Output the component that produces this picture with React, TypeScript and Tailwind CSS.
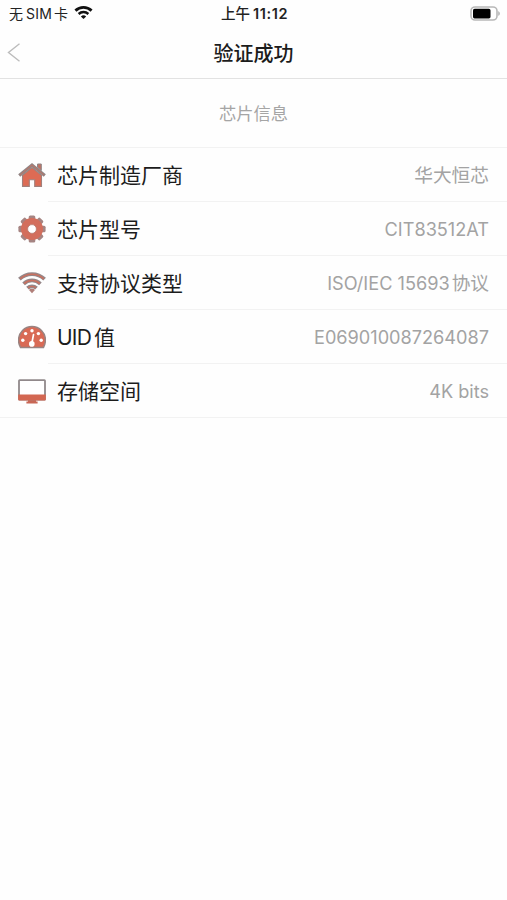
import type { ReactNode } from "react";
import clsx from "clsx";

type InfoRow = {
  id: string;
  label: ReactNode;
  value: ReactNode;
  icon: ReactNode;
};

function HouseIcon() {
  return (
    <svg width="28" height="28" viewBox="0 0 28 28" fill="none">
      <path d="M4.5 14.2 14 6.5l9.5 7.7v11.2h-6.8v-6.6h-5.4v6.6H4.5z" fill="#dd6b54" stroke="#a0807c" strokeWidth="1.1" />
      <path d="M19.5 3h3.8v6.5l-3.8-3.2z" fill="#c07264" stroke="#8f8585" strokeWidth="1" />
      <path d="M1.2 14.6 14 4l12.8 10.6" stroke="#8f8585" strokeWidth="3.2" />
      <path d="M1.8 14.1 14 4l12.2 10.1" stroke="#b8776b" strokeWidth="1.1" />
    </svg>
  );
}

function GearIcon() {
  return (
    <svg width="28" height="28" viewBox="0 0 28 28">
      <g fill="#a58482">
        {[0, 45, 90, 135].map((deg) => (
          <rect key={deg} x="10.7" y="0.4" width="6.6" height="27.2" rx="1.6" transform={`rotate(${deg} 14 14)`} />
        ))}
      </g>
      <circle cx="14" cy="14" r="11" fill="#d36e5c" />
      <circle cx="14" cy="14" r="4.4" fill="#fff" stroke="#b8796d" strokeWidth="0.8" />
    </svg>
  );
}

function SignalIcon() {
  return (
    <svg width="28" height="28" viewBox="0 0 28 28" fill="none">
      <g stroke="#94888a" strokeWidth="3.8">
        <path d="M1.4 10.2a18 18 0 0 1 25.2 0" />
        <path d="M5.6 14.9a12 12 0 0 1 16.8 0" />
        <path d="M9.5 19.2a6.5 6.5 0 0 1 9 0" />
      </g>
      <g stroke="#c9705f" strokeWidth="1.6">
        <path d="M2.2 9.8a17.4 17.4 0 0 1 23.6 0" />
        <path d="M6.2 14.6a11.5 11.5 0 0 1 15.6 0" />
        <path d="M10.1 18.9a6 6 0 0 1 7.8 0" />
      </g>
      <path d="M11 21a4.3 4.3 0 0 1 6 0l-3 3.2z" fill="#b07f79" />
    </svg>
  );
}

function GaugeIcon() {
  return (
    <svg width="28" height="28" viewBox="0 0 28 28">
      <path
        d="M2.6 24.6A13.4 13.4 0 0 1 .6 17a13.4 13.4 0 0 1 26.8 0c0 2.8-.7 5.3-2 7.6z"
        fill="#d96a55"
        stroke="#998482"
        strokeWidth="1.5"
      />
      <g fill="#fff">
        <circle cx="4.8" cy="17.2" r="1.7" />
        <circle cx="7.6" cy="10.6" r="1.7" />
        <circle cx="14" cy="7.7" r="1.7" />
        <circle cx="20.4" cy="10.6" r="1.7" />
        <circle cx="23.2" cy="17.2" r="1.7" />
        <circle cx="13.8" cy="20.9" r="2.8" />
      </g>
      <path d="m13.8 20.5 1.7-8.8" stroke="#fff" strokeWidth="1.7" strokeLinecap="round" />
    </svg>
  );
}

function MonitorIcon() {
  return (
    <svg width="28" height="28" viewBox="0 0 28 28">
      <path d="M10 22h8v2.4h1.6v2H8.4v-2H10z" fill="#c86755" />
      <rect x="1" y="3.2" width="26" height="19.3" rx="0.6" fill="#fff" stroke="#91898b" strokeWidth="1.8" />
      <path d="M.2 17.6h27.6v4.8a1 1 0 0 1-1 1H1.2a1 1 0 0 1-1-1z" fill="#d36752" />
    </svg>
  );
}

const rows: InfoRow[] = [
  {
    id: "vendor",
    label: "芯片制造厂商",
    value: <span className="text-[18.7px]">华大恒芯</span>,
    icon: <HouseIcon />,
  },
  { id: "model", label: "芯片型号", value: "CIT83512AT", icon: <GearIcon /> },
  {
    id: "protocol",
    label: "支持协议类型",
    value: (
      <>
        ISO/IEC 15693<span className="ml-[2px] text-[18.7px]">协议</span>
      </>
    ),
    icon: <SignalIcon />,
  },
  {
    id: "uid",
    label: (
      <>
        <span className="tracking-[-0.8px]">UID</span>
        <span className="ml-[3px]">值</span>
      </>
    ),
    value: "E069010087264087",
    icon: <GaugeIcon />,
  },
  { id: "storage", label: "存储空间", value: "4K bits", icon: <MonitorIcon /> },
];

function StatusBar() {
  return (
    <div className="grid h-[27px] grid-cols-3 items-center pr-[6px] pl-[9px] text-[14px] leading-none text-[#222]">
      <div className="flex items-center">
        <span>无</span>
        <span className="ml-[3px] tracking-[0.2px]">SIM</span>
        <span className="ml-[2px]">卡</span>
        <svg className="mb-[2px] ml-[6px]" width="19" height="15" viewBox="0 0 20 16" fill="none">
          <path d="M1.4 6a12.5 12.5 0 0 1 17.2 0" stroke="#111" strokeWidth="3" />
          <path d="M4.8 9.6a7.6 7.6 0 0 1 10.4 0" stroke="#111" strokeWidth="2.6" />
          <path d="M7.2 12.2a4 4 0 0 1 5.6 0L10 15z" fill="#111" />
        </svg>
      </div>
      <div className="-ml-[1px] pt-[2px] text-center font-medium whitespace-nowrap">
        <span className="text-[14.5px]">上午</span>
        <span className="ml-[3px] text-[14.5px] font-semibold tracking-[0.6px]">11:12</span>
      </div>
      <svg className="justify-self-end" width="31" height="15" viewBox="0 0 31 15">
        <rect x="1" y="1" width="26" height="13" rx="4" fill="#fff" stroke="#b8b8b8" strokeWidth="1.6" />
        <rect x="3" y="2.8" width="17.5" height="9.6" rx="1.6" fill="#000" />
        <path d="M28.3 5.2c1.9.6 1.9 4 0 4.6z" fill="#aaa" />
      </svg>
    </div>
  );
}

export default function App() {
  return (
    <main className="min-h-screen w-full bg-[#fefefe] font-['Inter','Noto_Sans_CJK_SC',sans-serif]">
      <header className="h-[79px] border-b border-[#e2e2e2]">
        <StatusBar />
        <div className="grid h-[51px] grid-cols-3 items-center">
          <svg className="ml-[7px]" width="14" height="22" viewBox="0 0 14 22" fill="none">
            <path d="M12.5 1.8 1.5 10.5l11 8.7" stroke="#bcbcbc" strokeWidth="1.4" />
          </svg>
          <h1 className="pt-[2px] text-center text-[20px] leading-none font-medium text-[#1c1c1c]">验证成功</h1>
        </div>
      </header>

      <h2 className="flex h-[69px] items-center justify-center border-b border-[#f2f2f2] pt-[2px] text-[17.3px] text-[#a5a5a5]">
        芯片信息
      </h2>

      <ul>
        {rows.map((row, i) => (
          <li key={row.id} className="flex h-[54px] items-center pl-[18px]">
            <div className="w-[30px] shrink-0">{row.icon}</div>
            <div
              className={clsx(
                "flex h-full flex-1 items-center justify-between border-b border-[#f2f2f2] pt-[2px] pr-[18px]",
                i === rows.length - 1 ? "-ml-12 pl-[57px]" : "pl-[9px]"
              )}
            >
              <span className="text-[21px] leading-none text-[#1c1c1c]">{row.label}</span>
              <span className="text-[18.15px] leading-none text-[#a3a3a3]">{row.value}</span>
            </div>
          </li>
        ))}
      </ul>
    </main>
  );
}
